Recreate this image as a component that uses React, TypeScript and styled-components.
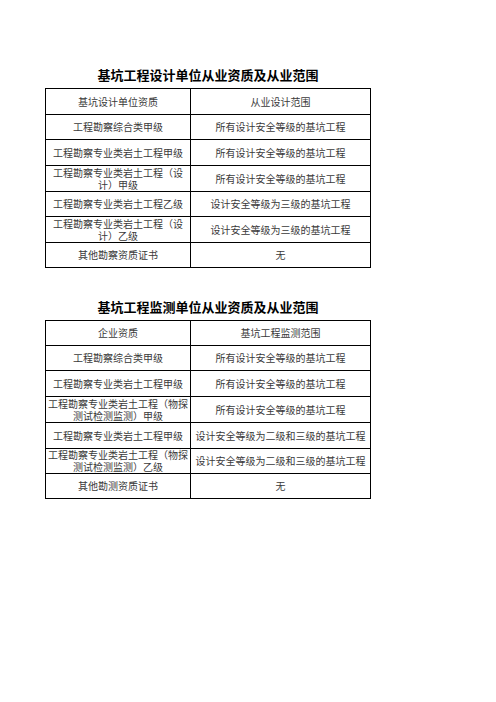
import React from 'react';
import styled, { createGlobalStyle } from 'styled-components';

type Row = { left: string[]; right: string; height: number };

type Section = { title: string; head: [string, string]; headHeight: number; rows: Row[] };

const sections: Section[] = [
    {
        title: '基坑工程设计单位从业资质及从业范围',
        head: ['基坑设计单位资质', '从业设计范围'],
        headHeight: 26,
        rows: [
            { left: ['工程勘察综合类甲级'], right: '所有设计安全等级的基坑工程', height: 25 },
            { left: ['工程勘察专业类岩土工程甲级'], right: '所有设计安全等级的基坑工程', height: 26 },
            { left: ['工程勘察专业类岩土工程（设', '计）甲级'], right: '所有设计安全等级的基坑工程', height: 26 },
            { left: ['工程勘察专业类岩土工程乙级'], right: '设计安全等级为三级的基坑工程', height: 25 },
            { left: ['工程勘察专业类岩土工程（设', '计）乙级'], right: '设计安全等级为三级的基坑工程', height: 26 },
            { left: ['其他勘察资质证书'], right: '无', height: 25 },
        ],
    },
    {
        title: '基坑工程监测单位从业资质及从业范围',
        head: ['企业资质', '基坑工程监测范围'],
        headHeight: 25,
        rows: [
            { left: ['工程勘察综合类甲级'], right: '所有设计安全等级的基坑工程', height: 25 },
            { left: ['工程勘察专业类岩土工程甲级'], right: '所有设计安全等级的基坑工程', height: 26 },
            { left: ['工程勘察专业类岩土工程（物探', '测试检测监测）甲级'], right: '所有设计安全等级的基坑工程', height: 26 },
            { left: ['工程勘察专业类岩土工程甲级'], right: '设计安全等级为二级和三级的基坑工程', height: 26 },
            { left: ['工程勘察专业类岩土工程（物探', '测试检测监测）乙级'], right: '设计安全等级为二级和三级的基坑工程', height: 25 },
            { left: ['其他勘测资质证书'], right: '无', height: 25 },
        ],
    },
];

const App = (): JSX.Element => {
    return (
        <>
            <GlobalStyle />
            <Page>
                {sections.map((section, i) => (
                    <Block key={section.title} first={i === 0}>
                        <Title>{section.title}</Title>
                        <Table>
                            <Cell height={section.headHeight}>{section.head[0]}</Cell>
                            <Cell height={section.headHeight}>{section.head[1]}</Cell>
                            {section.rows.map((row, j) => (
                                <React.Fragment key={j}>
                                    <Cell height={row.height}>
                                        {row.left.map((line) => (
                                            <Line key={line}>{line}</Line>
                                        ))}
                                    </Cell>
                                    <Cell height={row.height}>{row.right}</Cell>
                                </React.Fragment>
                            ))}
                        </Table>
                    </Block>
                ))}
            </Page>
        </>
    );
};

const GlobalStyle = createGlobalStyle`
    html, body {
        margin: 0;
        padding: 0;
        background: #ffffff;
    }
    body {
        font-family: "Liberation Serif", "Noto Sans CJK SC", serif;
    }
`;

const Page = styled.main`
    width: 496px;
    min-height: 702px;
    padding: 65px 0 0 45px;
    box-sizing: border-box;
`;

const Block = styled.section<{ first: boolean }>`
    width: 326px;
    margin-top: ${(props) => (props.first ? '0' : '29px')};
`;

const Title = styled.h2`
    margin: 0 0 3px;
    height: 20px;
    line-height: 20px;
    text-align: center;
    font-family: "Noto Sans CJK SC", sans-serif;
    font-size: 13px;
    font-weight: 700;
    color: #000000;
`;

const Table = styled.div`
    display: grid;
    grid-template-columns: 145px 180px;
    border-top: 1px solid #000000;
    border-left: 1px solid #000000;
`;

const Cell = styled.div<{ height: number }>`
    box-sizing: border-box;
    height: ${(props) => props.height}px;
    border-right: 1px solid #000000;
    border-bottom: 1px solid #000000;
    display: flex;
    flex-direction: column;
    align-items: center;
    justify-content: center;
    white-space: nowrap;
    font-family: "Noto Sans CJK SC", serif;
    font-size: 10px;
    line-height: 12px;
    font-weight: 400;
    color: #3a3a3a;
`;

const Line = styled.span`
    display: block;
`;

export default App;
